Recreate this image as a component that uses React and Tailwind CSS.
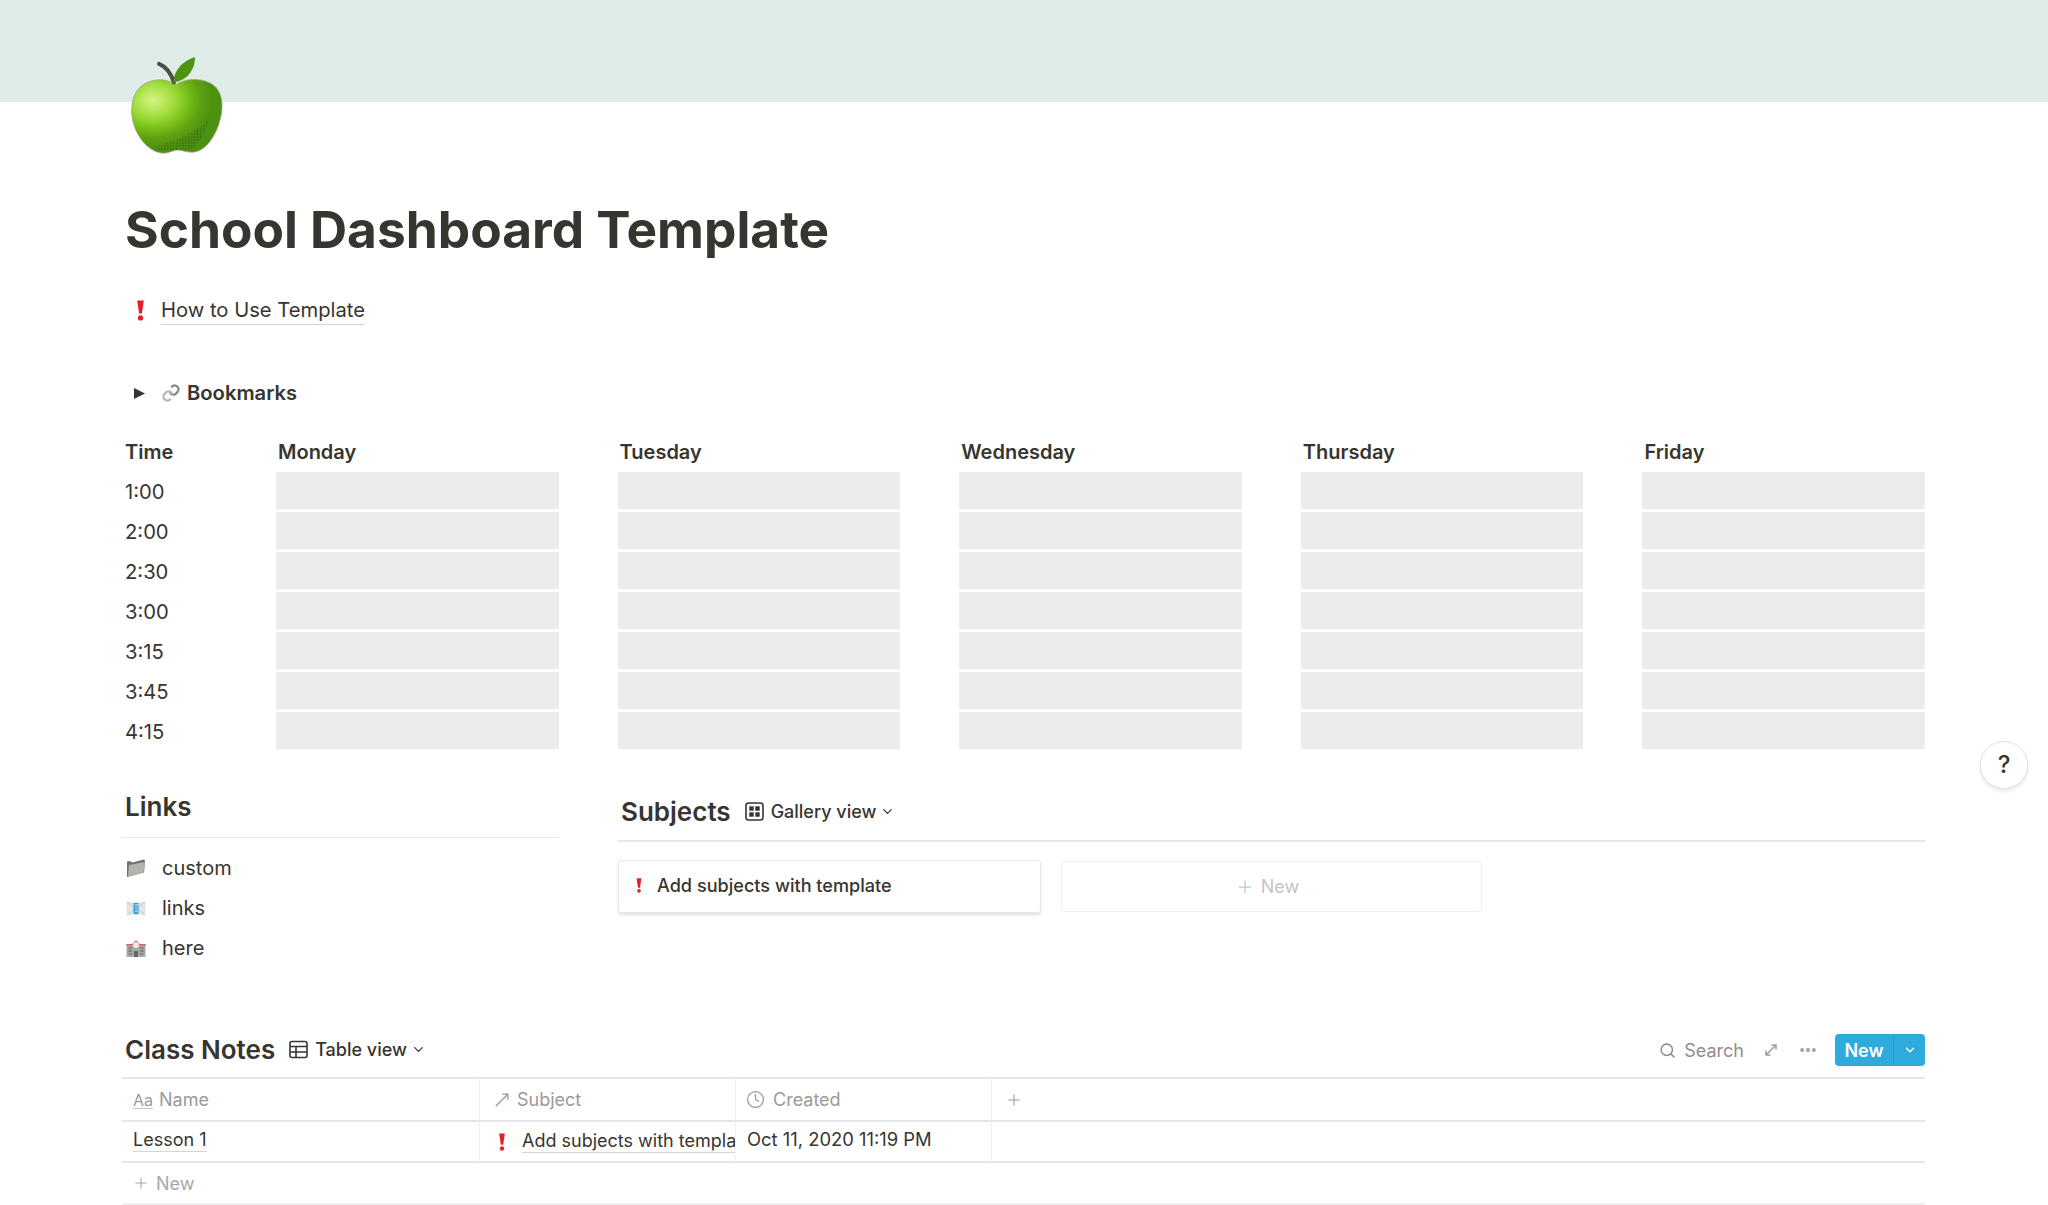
import { ChevronDown, Plus, Search, MoveUpRight, Clock, Ellipsis } from 'lucide-react';

const times = ['1:00', '2:00', '2:30', '3:00', '3:15', '3:45', '4:15'];
const days = ['Monday', 'Tuesday', 'Wednesday', 'Thursday', 'Friday'];

function Apple() {
  return (
    <svg width="94" height="98" viewBox="0 0 94 100" preserveAspectRatio="none" className="block">
      <defs>
        <radialGradient id="appleBody" cx="0.24" cy="0.28" r="0.85">
          <stop offset="0" stopColor="#d2f285" />
          <stop offset="0.13" stopColor="#bfe960" />
          <stop offset="0.3" stopColor="#98d934" />
          <stop offset="0.48" stopColor="#74b916" />
          <stop offset="0.62" stopColor="#5da012" />
          <stop offset="0.78" stopColor="#4a920f" />
          <stop offset="1" stopColor="#4a920f" />
        </radialGradient>
        <pattern id="appleDots" width="3" height="3" patternUnits="userSpaceOnUse">
          <rect width="1.5" height="1.5" fill="#33402c" />
        </pattern>
      </defs>
      <path d="M45 28C35 21 17 21 7 33C-2 45 -1 65 7 79C14 92 25 99 35 98C40 97 44 95 47 95C51 95 56 98 63 97C73 96 83 84 88 68C93 52 92 38 84 30C74 21 56 21 45 28Z" fill="url(#appleBody)" stroke="#a0a699" strokeWidth="0.8" />
      <path d="M22 92C34 88 56 84 77 64C75 76 66 92 60 95C54 93 42 96 35 96C30 96 26 95 22 92Z" fill="url(#appleDots)" opacity="0.55" />
      <path d="M43 26C40 17 36 10 28 7" fill="none" stroke="#4c4c48" strokeWidth="4" strokeLinecap="round" />
      <path d="M42 26C43 13 53 3 64 0C64 11 58 24 42 26Z" fill="#4f9410" />
    </svg>
  );
}

function Bang({ className }) {
  return (
    <svg viewBox="0 0 10 24" className={className}>
      <path d="M1.2 0.5H8.8L6.6 15.5H3.4Z" fill="#e3202a" />
      <circle cx="5" cy="20.5" r="3" fill="#e3202a" />
    </svg>
  );
}

function LinkEmoji() {
  return (
    <svg width="22" height="22" viewBox="0 0 20 20" fill="none">
      <path d="M10.8 4.2C12 3 14 2.6 15.8 4.2C17.4 5.8 17 8 15.8 9.2L14.4 10.6C13.2 11.8 11.2 11.8 10 10.6L9 9.6" stroke="#80877f" strokeWidth="2" strokeLinecap="round" />
      <path d="M9.2 15.8C8 17 6 17.4 4.2 15.8C2.6 14.2 3 12 4.2 10.8L5.6 9.4C6.8 8.2 8.8 8.2 10 9.4L11 10.4" stroke="#b4bab6" strokeWidth="2" strokeLinecap="round" />
    </svg>
  );
}

function FolderEmoji() {
  return (
    <svg width="20" height="20" viewBox="0 0 20 20">
      <path d="M1 3.5L4 3L6 4.5L18 1.5L19 3L18 14.5L1 19Z" fill="#6f716a" />
      <path d="M3 7L19 4L17.5 14.5L2 18.5Z" fill="#b2b3ac" />
    </svg>
  );
}

function MailEmoji() {
  return (
    <svg width="20" height="20" viewBox="0 0 20 20">
      <rect x="0.5" y="4" width="19" height="13" fill="#e2e5e6" />
      <path d="M1 4L8 10M19 4L12 10M1 17L8 11M19 17L12 11" stroke="#c4c9cb" strokeWidth="1" />
      <rect x="7.5" y="5" width="5" height="11" fill="#3aa0d8" />
      <path d="M9 7H12M9 10H11.5M9 13H12" stroke="#e2f0f8" strokeWidth="1" />
    </svg>
  );
}

function SchoolEmoji() {
  return (
    <svg width="20" height="20" viewBox="0 0 20 20">
      <rect x="0.5" y="6" width="19" height="13" fill="#a8a9a4" />
      <path d="M0.5 6H6L10 2L14 6H19.5V7.5H0.5Z" fill="#d06a66" />
      <circle cx="10" cy="7" r="3" fill="#eceae4" />
      <rect x="8" y="13" width="4" height="6" fill="#66665f" />
      <path d="M2.5 10H6M2.5 13H6M2.5 16H6M14 10H17.5M14 13H17.5M14 16H17.5" stroke="#62625c" strokeWidth="1.2" />
    </svg>
  );
}

function GalleryIcon() {
  return (
    <svg width="19" height="19" viewBox="0 0 19 19" fill="none">
      <rect x="1" y="1" width="17" height="17" rx="2.5" stroke="#37352f" strokeWidth="1.6" />
      <rect x="4.3" y="4.3" width="4.4" height="4.4" fill="#37352f" />
      <rect x="10.3" y="4.3" width="4.4" height="4.4" fill="#37352f" />
      <rect x="4.3" y="10.3" width="4.4" height="4.4" fill="#37352f" />
      <rect x="10.3" y="10.3" width="4.4" height="4.4" fill="#37352f" />
    </svg>
  );
}

function TableIcon() {
  return (
    <svg width="19" height="19" viewBox="0 0 19 19" fill="none" stroke="#37352f" strokeWidth="1.6">
      <rect x="1" y="1.5" width="17" height="16" rx="2" />
      <path d="M1 6.5H18M1 12H18M7 6.5V17.5" />
    </svg>
  );
}

function LinkRow({ icon, label }) {
  return (
    <div className="flex items-center h-10">
      <span className="w-[37px] pl-px">{icon}</span>
      <span className="text-[20px] text-[#37352f]">{label}</span>
    </div>
  );
}

function ViewTitle({ title, view, icon }) {
  return (
    <div className="flex items-center gap-[14px] pl-[3px]">
      <span className="text-[26px] font-semibold text-[#37352f] leading-8">{title}</span>
      <span className="flex items-center gap-[7px] text-[18px] font-medium text-[#37352f] -mt-[2px]">
        {icon}
        {view}
        <ChevronDown size={15} strokeWidth={2} className="-ml-[3px]" />
      </span>
    </div>
  );
}

export default function App() {
  return (
    <div className="relative h-[1205px] overflow-hidden bg-white font-['Inter',sans-serif] text-[#37352f]">
      <div className="h-[102px] bg-[#dfece8]" />

      <div className="-mt-[45px] pl-[131px]">
        <Apple />
      </div>

      <div className="pl-[122px] pr-[123px]">
        <h1 className="pl-[3px] mt-[41px] text-[51.4px] font-bold leading-[66px]">School Dashboard Template</h1>

        <div className="flex items-center mt-[30px] h-9 pl-[3px]">
          <span className="w-[36px] flex justify-center pr-[5px]"><Bang className="w-[9px] h-[21px]" /></span>
          <span className="text-[20.2px] border-b border-[#d5d5d3] leading-[28px]">How to Use Template</span>
        </div>

        <div className="flex items-center mt-[47px] h-9 pl-[3px]">
          <span className="w-[35px] pl-[8px]">
            <svg width="13" height="13" viewBox="0 0 13 13"><path d="M1 1L12 6.5L1 12Z" fill="#37352f" /></svg>
          </span>
          <LinkEmoji />
          <span className="ml-[5px] text-[20.2px] font-semibold">Bookmarks</span>
        </div>

        {/* Timetable */}
        <div className="flex mt-[22px]">
          <div className="w-[154px] shrink-0 pl-[3px]">
            <div className="h-[39px] pb-[2px] flex items-center text-[20px] font-semibold">Time</div>
            {times.map((t) => (
              <div key={t} className="h-10 flex items-center text-[20.2px]">{t}</div>
            ))}
          </div>
          <div className="flex gap-[59px] flex-1">
            {days.map((d) => (
              <div key={d} className="flex-1">
                <div className="h-[39px] pb-[2px] flex items-center pl-[2px] text-[20px] font-semibold">{d}</div>
                {times.map((t) => (
                  <div key={t} className="h-10 pb-[3px]">
                    <div className="h-full bg-[#ebeced]" />
                  </div>
                ))}
              </div>
            ))}
          </div>
        </div>

        {/* Links and Subjects */}
        <div className="flex mt-[35px] gap-[59px]">
          <div className="w-[437px] shrink-0">
            <div className="pl-[3px] text-[26px] font-semibold leading-9 mt-[2px]">Links</div>
            <div className="h-px bg-[#e9e9e7] mt-[12px] mb-[10px]" />
            <div className="pl-[3px]">
              <LinkRow icon={<FolderEmoji />} label="custom" />
              <LinkRow icon={<MailEmoji />} label="links" />
              <LinkRow icon={<SchoolEmoji />} label="here" />
            </div>
          </div>

          <div className="flex-1 pt-[9px]">
            <ViewTitle title="Subjects" view="Gallery view" icon={<GalleryIcon />} />
            <div className="h-[2px] bg-[#e6e6e5] mt-[12px] mb-[18px]" />
            <div className="flex gap-[20px]">
              <div className="w-[423px] h-[53px] pb-[2px] flex items-center rounded-[3px] bg-white border border-[#e9e9e7] shadow-[0_2px_3px_rgba(15,15,15,0.12)] pl-4">
                <Bang className="w-[8px] h-[15px]" />
                <span className="ml-[14px] text-[18.1px] font-medium">Add subjects with template</span>
              </div>
              <div className="w-[421px] h-[51px] mt-[1px] pr-[9px] flex items-center justify-center gap-[6px] rounded-[3px] border border-[#f1f1f0] text-[18px] text-[#c4c4c2]">
                <Plus size={20} strokeWidth={1.5} />
                New
              </div>
            </div>
          </div>
        </div>

        {/* Class Notes */}
        <div className="flex items-center justify-between mt-[66px] h-8">
          <ViewTitle title="Class Notes" view="Table view" icon={<TableIcon />} />
          <div className="flex items-center text-[18px] text-[#8f8e8a]">
            <Search size={17} strokeWidth={2.2} />
            <span className="ml-[8px]">Search</span>
            <svg width="14" height="14" viewBox="0 0 14 14" fill="none" stroke="#a0a09c" strokeWidth="1.6" className="ml-[20px]">
              <path d="M2 12L12 2M7.5 2H12V6.5M2 7.5V12H6.5" />
            </svg>
            <Ellipsis size={20} strokeWidth={2.8} className="ml-[20px] text-[#a0a09c]" />
            <div className="ml-[17px] flex h-[32px] w-[90px] rounded-[4px] bg-[#2eaadc] text-white font-semibold">
              <span className="flex-1 flex items-center justify-center border-r border-[#2a94c0]">New</span>
              <span className="w-[31px] flex items-center justify-center"><ChevronDown size={14} strokeWidth={2.2} /></span>
            </div>
          </div>
        </div>

        <div className="mt-[11px] border-t-2 border-[#e6e6e5] text-[18px]">
          <div className="flex h-[43px] border-b-2 border-[#e6e6e5] text-[#9b9a97]">
            <div className="w-[358px] flex items-center pl-[11px] border-r border-[#f1f1f0]">
              <span className="text-[16px] underline decoration-[#c4c4c2] underline-offset-2">Aa</span>
              <span className="ml-[6px]">Name</span>
            </div>
            <div className="w-[256px] flex items-center pl-[12px] border-r border-[#f1f1f0]">
              <MoveUpRight size={20} strokeWidth={1.6} />
              <span className="ml-[5px]">Subject</span>
            </div>
            <div className="w-[256px] flex items-center pl-[10px] border-r border-[#f1f1f0]">
              <Clock size={19} strokeWidth={1.6} />
              <span className="ml-[8px]">Created</span>
            </div>
            <div className="pl-[13px] flex items-center"><Plus size={18} strokeWidth={1.4} /></div>
          </div>
          <div className="flex h-[41px] border-b-2 border-[#e6e6e5]">
            <div className="w-[358px] flex items-center pl-[11px] border-r border-[#f1f1f0] pb-[3px]">
              <span className="border-b border-[#d5d5d3] leading-[22px]">Lesson 1</span>
            </div>
            <div className="w-[256px] flex items-center pl-[18px] border-r border-[#f1f1f0] overflow-hidden whitespace-nowrap">
              <Bang className="w-[8px] h-[18px] shrink-0" />
              <span className="ml-[16px] border-b border-[#d5d5d3] leading-[22px]">Add subjects with template</span>
            </div>
            <div className="w-[256px] flex items-center pl-[11px] border-r border-[#f1f1f0] pb-[3px] whitespace-nowrap text-[18.4px]">Oct 11, 2020 11:19 PM</div>
          </div>
          <div className="flex items-center h-[42px] pl-[10px] gap-[6px] border-b-2 border-[#f1f1f0] text-[#a9a8a5]">
            <Plus size={18} strokeWidth={1.4} />
            New
          </div>
        </div>
      </div>

      {/* Help button */}
      <div className="absolute left-[1980px] top-[741px] w-12 h-12 rounded-full bg-white border border-[#e3e3e1] shadow-[0_2px_4px_rgba(15,15,15,0.1)] flex items-center justify-center text-[24px] font-medium">?</div>
    </div>
  );
}
